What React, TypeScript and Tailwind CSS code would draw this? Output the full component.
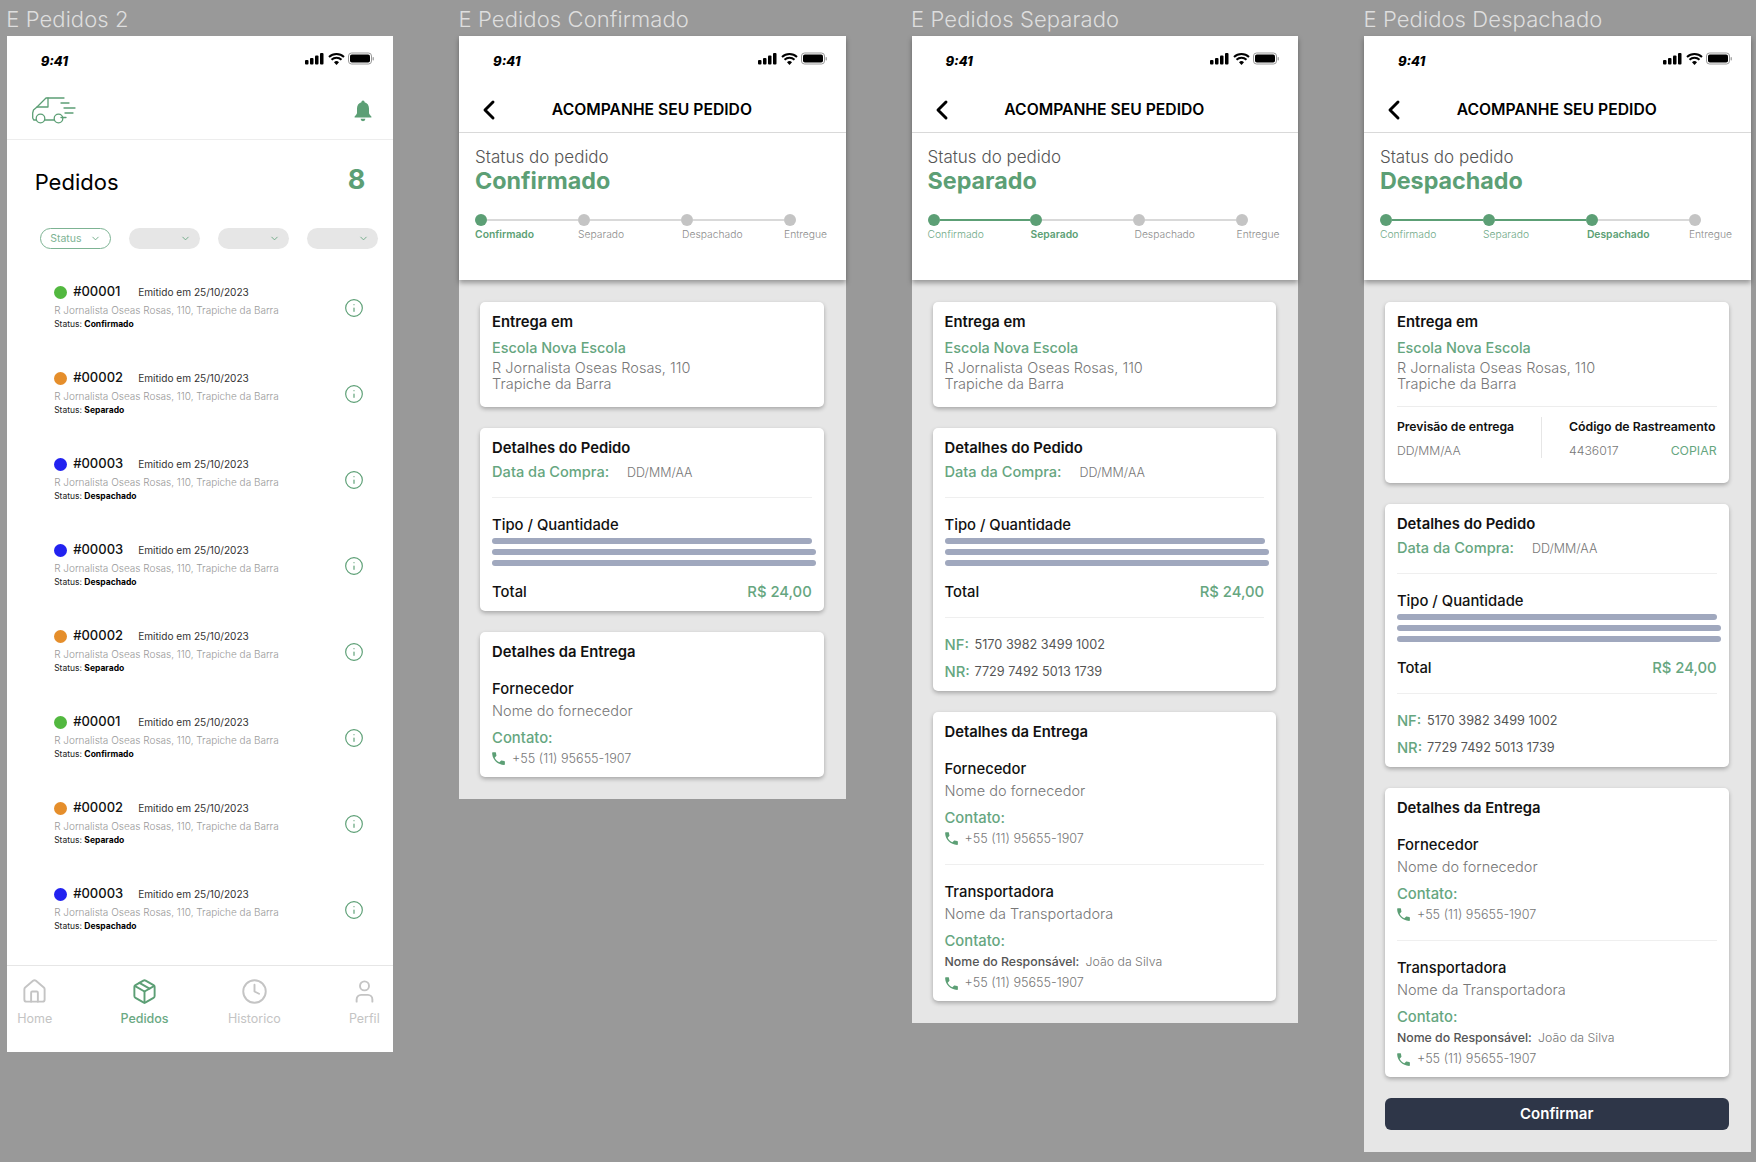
import { ChevronDown, ChevronLeft, Clock, Home, Info, Package, User } from 'lucide-react';
import { MdLocalPhone } from 'react-icons/md';
import type { ReactNode } from 'react';

const orders = [
  { id: '#00001', dot: 'bg-[#52b83f]', status: 'Confirmado' },
  { id: '#00002', dot: 'bg-[#e58e2b]', status: 'Separado' },
  { id: '#00003', dot: 'bg-[#2222f0]', status: 'Despachado' },
  { id: '#00003', dot: 'bg-[#2222f0]', status: 'Despachado' },
  { id: '#00002', dot: 'bg-[#e58e2b]', status: 'Separado' },
  { id: '#00001', dot: 'bg-[#52b83f]', status: 'Confirmado' },
  { id: '#00002', dot: 'bg-[#e58e2b]', status: 'Separado' },
  { id: '#00003', dot: 'bg-[#2222f0]', status: 'Despachado' },
];

const steps = ['Confirmado', 'Separado', 'Despachado', 'Entregue'];

export default function App() {
  return (
    <div className="w-[1756px] h-[1162px] overflow-hidden bg-[#999999] flex items-start gap-[65.77px] pl-[6.67px] font-['Inter',sans-serif]">
      <Frame label="E Pedidos 2">
        <PedidosList />
      </Frame>
      <Frame label="E Pedidos Confirmado">
        <Tracking step={0} />
      </Frame>
      <Frame label="E Pedidos Separado">
        <Tracking step={1} />
      </Frame>
      <Frame label="E Pedidos Despachado">
        <Tracking step={2} />
      </Frame>
    </div>
  );
}

function Frame({ label, children }: { label: string; children: ReactNode }) {
  return (
    <div className="w-[386.67px] flex-shrink-0">
      <p className="h-[35.5px] text-[22px] leading-[38px] text-[#dedede] font-light tracking-[0.1px] -ml-[0.5px]">{label}</p>
      <div className="bg-white">{children}</div>
    </div>
  );
}

function StatusBar() {
  return (
    <div className="h-[49px] flex-shrink-0 flex items-center justify-between pl-[34px] pr-[18px] pt-[2px]">
      <span className="text-[13px] italic font-extrabold text-black leading-none mt-[1px]">9:41</span>
      <svg width="70" height="14" viewBox="0 0 70 14" className="-mt-[4px]">
        <rect x="0" y="8" width="3.5" height="4.5" rx="1" fill="#000" />
        <rect x="5" y="6" width="3.5" height="6.5" rx="1" fill="#000" />
        <rect x="10" y="3.5" width="3.5" height="9" rx="1" fill="#000" />
        <rect x="15" y="1" width="3.5" height="11.5" rx="1" fill="#000" />
        <path d="M24 5a11 11 0 0 1 15 0M26.500 7.700a7.400 7.400 0 0 1 10 0" stroke="#000" strokeWidth="2" fill="none" />
        <path d="M29 10.300a3.600 3.600 0 0 1 5 0L31.500 13z" fill="#000" />
        <rect x="43.500" y="1" width="23" height="11" rx="3" stroke="#999" fill="none" />
        <rect x="45" y="2.500" width="20" height="8" rx="1.800" fill="#000" />
        <rect x="67.500" y="5" width="1.500" height="3.500" rx="0.700" fill="#aaa" />
      </svg>
    </div>
  );
}

function VanIcon() {
  return (
    <svg width="44" height="27" viewBox="0 0 44 27" fill="none" stroke="#5c9f75" strokeWidth="1.3" strokeLinecap="round" strokeLinejoin="round">
      <path d="M32 1H14L5 10 1.500 13 .700 16v5l1 2h2.300" />
      <path d="M5 10h11V1" />
      <path d="M13 23h9" />
      <circle cx="8.500" cy="21.500" r="4.300" />
      <circle cx="26.500" cy="21.500" r="4.300" />
      <path d="M29 6h8M32 11h11M33 16h8M29 20.500h5" />
    </svg>
  );
}

function BellIcon() {
  return (
    <svg width="18" height="22" viewBox="0 0 18 22" fill="#5c9f75">
      <path d="M9 0.500a1.600 1.600 0 0 1 1.600 1.700C13.600 3 15 5.600 15 8.600v4.200c0 1.200 1 2.400 2.400 3.600v1.100H.600v-1.100C2 15.200 3 14 3 12.800V8.600c0-3 1.400-5.600 4.400-6.400A1.600 1.600 0 0 1 9 .500z" />
      <path d="M6.600 18.800h4.800a2.400 2.400 0 0 1-4.800 0z" />
    </svg>
  );
}

function PedidosList() {
  return (
    <div className="h-[1016.5px] flex flex-col">
      <StatusBar />
      <div className="h-[55.5px] flex-shrink-0 border-b border-[#ededed] flex items-center justify-between pl-[25px] pr-[21px] pb-[2px]">
        <VanIcon />
        <BellIcon />
      </div>
      <div className="flex-shrink-0 flex items-center justify-between pl-[28px] pr-[28px] pt-[26px]">
        <h1 className="text-[22px] leading-[32px] text-black font-normal">Pedidos</h1>
        <span className="text-[27px] leading-[32px] font-bold text-[#5c9f75] -mt-[5px]">8</span>
      </div>
      <div className="flex-shrink-0 flex gap-[18px] pl-[33.5px] mt-[30px]">
        <div className="w-[71px] h-[21px] rounded-full border border-[#7db393] flex items-center pl-[9px] pr-[9px] justify-between">
          <span className="text-[10.5px] text-[#7db393]">Status</span>
          <ChevronDown size={11} color="#6ba883" />
        </div>
        {[0, 1, 2].map((i) => (
          <div key={i} className="w-[71px] h-[21px] rounded-full bg-[#e6e6e6] flex items-center justify-end pr-[9px]">
            <ChevronDown size={11} color="#6ba883" />
          </div>
        ))}
      </div>
      <div className="flex-1 min-h-0 flex flex-col pt-[33px] pl-[47.5px]">
        {orders.map((o, i) => (
          <OrderRow key={i} id={o.id} dot={o.dot} status={o.status} />
        ))}
      </div>
      <BottomNav />
    </div>
  );
}

function OrderRow({ id, dot, status }: { id: string; dot: string; status: string }) {
  return (
    <div className="h-[86px] flex-shrink-0 flex items-start pr-[29px]">
      <div className="flex-1">
        <div className="flex items-center h-[20px]">
          <span className={`w-[13px] h-[13px] rounded-full ${dot}`} />
          <span className="ml-[6px] text-[13px] font-medium text-[#111] w-[65px]">{id}</span>
          <span className="text-[10.1px] text-[#333] mt-[1px]">Emitido em 25/10/2023</span>
        </div>
        <p className="text-[10px] leading-[14px] mt-[1px] text-[#999] font-light">R Jornalista Oseas Rosas, 110, Trapiche da Barra</p>
        <p className="text-[8.5px] leading-[12px] mt-[1px] text-[#222]">
          Status: <span className="font-bold text-black">{status}</span>
        </p>
      </div>
      <Info size={20} strokeWidth={1.4} color="#5c9f75" className="mt-[16px]" />
    </div>
  );
}

function BottomNav() {
  const items = [
    { label: 'Home', Icon: Home, active: false },
    { label: 'Pedidos', Icon: Package, active: true },
    { label: 'Historico', Icon: Clock, active: false },
    { label: 'Perfil', Icon: User, active: false },
  ];
  return (
    <div className="relative z-10 bg-white h-[87px] flex-shrink-0 border-t border-[#e6e6e6] flex justify-between pt-[12px] pr-[1px]">
      {items.map(({ label, Icon, active }) => (
        <div key={label} className="w-[56px] flex flex-col items-center gap-[6px]">
          <Icon size={27} strokeWidth={1.7} color={active ? '#5c9f75' : '#c4c4c4'} />
          <span className={`text-[12.5px] leading-[16px] whitespace-nowrap ${active ? 'font-medium text-[#6aa983]' : 'text-[#c4c4c4]'}`}>{label}</span>
        </div>
      ))}
    </div>
  );
}

function Tracking({ step }: { step: number }) {
  return (
    <div className="bg-[#e6e6e6]">
      <div className="bg-white shadow-[0_3px_5px_rgba(0,0,0,0.35)] h-[244.5px] flex flex-col">
        <StatusBar />
        <div className="h-[48px] flex-shrink-0 border-b border-[#d9d9d9] flex items-center pl-[14px] pt-[3px]">
          <ChevronLeft size={32} strokeWidth={2.2} color="#000" />
          <span className="flex-1 text-center text-[15.7px] font-semibold text-black pr-[44px] -ml-[3px]">ACOMPANHE SEU PEDIDO</span>
        </div>
        <div className="pl-[16px] pt-[14px]">
          <p className="text-[17px] leading-[20px] font-light text-[#555]">Status do pedido</p>
          <p className="text-[23.3px] leading-[28px] font-bold text-[#5c9f75]">{steps[step]}</p>
        </div>
        <Stepper step={step} />
      </div>
      <div className="flex flex-col gap-[21.5px] pl-[21px] pr-[22px] pt-[21.5px] pb-[22px]">
        <EntregaCard step={step} />
        <DetalhesPedido step={step} />
        <DetalhesEntrega step={step} />
        {step === 2 && (
          <button className="h-[32px] rounded-[6px] bg-[#2e3648] text-white text-[15px] font-semibold">Confirmar</button>
        )}
      </div>
    </div>
  );
}

function Stepper({ step }: { step: number }) {
  return (
    <div className="pl-[16px] pr-[50px] mt-[19.5px]">
      <div className="flex items-center">
        {steps.map((s, i) => (
          <div key={s} className={`flex items-center ${i < 3 ? 'flex-1' : ''}`}>
            <span className={`w-[12px] h-[12px] rounded-full flex-shrink-0 ${i <= step ? 'bg-[#5c9f75]' : 'bg-[#c4c4c4]'}`} />
            {i < 3 && <span className={`flex-1 h-[2px] ${i < step ? 'bg-[#5c9f75]' : 'bg-[#d9d9d9]'}`} />}
          </div>
        ))}
      </div>
      <div className="grid grid-cols-[103px_104px_102px_50px] mt-[1px]">
        {steps.map((s, i) => (
          <span
            key={s}
            className={`text-[10.3px] leading-[14px] whitespace-nowrap ${i === step ? 'font-semibold text-[#5c9f75]' : i < step ? 'font-light text-[#6fa987]' : 'font-light text-[#8c8c8c]'}`}
          >
            {s}
          </span>
        ))}
      </div>
    </div>
  );
}

function Card({ children }: { children: ReactNode }) {
  return (
    <div className="bg-white rounded-[5px] shadow-[0_2px_4px_rgba(0,0,0,0.28)] px-[12px]">{children}</div>
  );
}

function Title({ children }: { children: ReactNode }) {
  return <p className="text-[14.8px] leading-[20px] font-semibold text-[#111]">{children}</p>;
}

function EntregaCard({ step }: { step: number }) {
  return (
    <Card>
      <div className="pt-[10px] pb-[14px]">
        <Title>Entrega em</Title>
        <p className="text-[14.4px] leading-[20px] font-medium text-[#66a67f] mt-[6px]">Escola Nova Escola</p>
        <p className="text-[14.5px] leading-[16.5px] font-light text-[#777] mt-[2px]">
          R Jornalista Oseas Rosas, 110
          <br />
          Trapiche da Barra
        </p>
      </div>
      {step === 2 && (
        <div className="border-t border-[#ededed] flex pt-[10px] pb-[22px] -mt-[1px]">
          <div className="w-[145px] h-[41px] border-r border-[#e6e6e6]">
            <p className="text-[12.2px] leading-[20px] font-semibold text-[#111]">Previsão de entrega</p>
            <p className="text-[12.2px] leading-[20px] font-light text-[#777] mt-[4px]">DD/MM/AA</p>
          </div>
          <div className="flex-1 pl-[27px]">
            <p className="text-[12.3px] leading-[20px] font-semibold text-[#111] whitespace-nowrap">Código de Rastreamento</p>
            <div className="flex justify-between mt-[4px]">
              <span className="text-[12.3px] leading-[20px] font-light text-[#777]">4436017</span>
              <span className="text-[12.3px] leading-[20px] text-[#66a67f]">COPIAR</span>
            </div>
          </div>
        </div>
      )}
    </Card>
  );
}

function DetalhesPedido({ step }: { step: number }) {
  return (
    <Card>
      <div className="pt-[10px]">
        <Title>Detalhes do Pedido</Title>
        <div className="flex items-center h-[20px] mt-[5px]">
          <span className="text-[14.6px] font-medium text-[#66a67f] w-[136px]">Data da Compra:</span>
          <span className="ml-[-1px] text-[12.5px] font-light text-[#777]">DD/MM/AA</span>
        </div>
        <div className="h-px bg-[#efefef] mt-[14px]" />
        <p className="text-[14.8px] leading-[20px] font-medium text-[#111] mt-[17px]">Tipo / Quantidade</p>
        <div className="flex flex-col gap-[5.5px] mt-[3px] -mr-[5px]">
          <div className="h-[5.5px] w-[320px] rounded-full bg-[#a0a8be]" />
          <div className="h-[5.5px] w-[324px] rounded-full bg-[#a0a8be]" />
          <div className="h-[5.5px] w-[324px] rounded-full bg-[#a0a8be]" />
        </div>
        <div className="flex justify-between items-center h-[20px] mt-[17px]">
          <span className="text-[14.8px] font-medium text-[#111]">Total</span>
          <span className="text-[14.8px] font-medium text-[#66a67f]">R$ 24,00</span>
        </div>
        {step === 0 && <div className="h-[8px]" />}
        {step > 0 && (
          <>
            <div className="h-px bg-[#efefef] mt-[14px]" />
            <div className="pt-[14px] pb-[5px]">
              <NotaRow label="NF:" value="5170 3982 3499 1002" />
              <NotaRow label="NR:" value="7729 7492 5013 1739" />
            </div>
          </>
        )}
      </div>
    </Card>
  );
}

function NotaRow({ label, value }: { label: string; value: string }) {
  return (
    <div className="flex items-center h-[27px]">
      <span className="text-[14.8px] font-medium text-[#66a67f] w-[30px]">{label}</span>
      <span className="text-[12.7px] text-[#555]">{value}</span>
    </div>
  );
}

function Phone() {
  return (
    <div className="flex items-center gap-[5px] h-[20px]">
      <MdLocalPhone size={17} color="#5c9f75" className="flex-shrink-0 -ml-[2px] -mt-[1px]" />
      <span className="text-[12.6px] font-light text-[#777]">+55 (11) 95655-1907</span>
    </div>
  );
}

function DetalhesEntrega({ step }: { step: number }) {
  return (
    <Card>
      <div className="pt-[10px] pb-[7.5px]">
        <Title>Detalhes da Entrega</Title>
        <p className="text-[14.8px] leading-[20px] font-medium text-[#111] mt-[17px]">Fornecedor</p>
        <p className="text-[14.5px] leading-[20px] font-light text-[#777] mt-[2px]">Nome do fornecedor</p>
        <p className="text-[14.8px] leading-[20px] font-medium text-[#66a67f] mt-[7px]">Contato:</p>
        <div className="mt-[1px]">
          <Phone />
        </div>
      </div>
      {step > 0 && (
        <div className="border-t border-[#efefef] mt-[7px] pt-[17px] pb-[7px]">
          <p className="text-[14.8px] leading-[20px] font-medium text-[#111]">Transportadora</p>
          <p className="text-[14.5px] leading-[20px] font-light text-[#777] mt-[2px]">Nome da Transportadora</p>
          <p className="text-[14.8px] leading-[20px] font-medium text-[#66a67f] mt-[7px]">Contato:</p>
          <p className="text-[12.3px] leading-[20px] mt-[1px] text-[#555] font-medium">
            Nome do Responsável: <span className="ml-[3px] font-light text-[#777]">João da Silva</span>
          </p>
          <div className="mt-[2px]">
            <Phone />
          </div>
        </div>
      )}
    </Card>
  );
}
